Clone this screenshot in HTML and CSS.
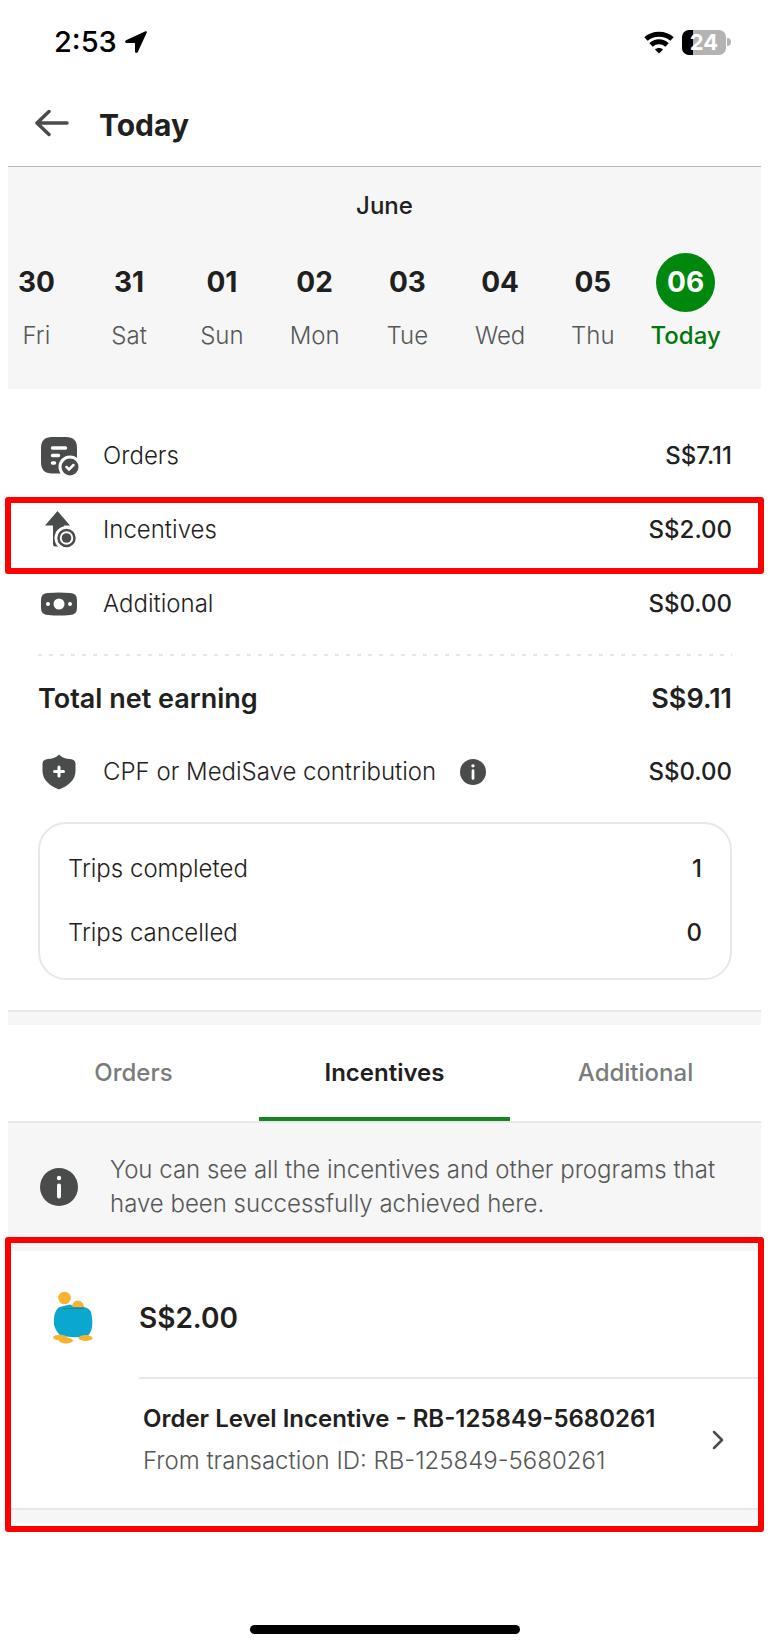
FILE: index.html
```html
<!DOCTYPE html>
<html lang="en">
<head>
    <meta charset="UTF-8">
    <meta name="viewport" content="width=device-width, initial-scale=1.0">
    <title>Today</title>
    <link rel="stylesheet" href="styles.css">
</head>
<body>
    <div class="screen">
        <div class="status-bar">
            <span class="time">2:53</span>
            <svg class="location" width="22" height="22" viewBox="0 0 22 22" fill="#000">
                <path d="M20.5 0.3 L1 9.2 C-0.4 10 0 12 1.5 12 H9.6 Q10 12 10 12.4 V20.4 C10 22 12 22.4 12.8 21 L21.8 1.6 C22.2 0.6 21.5 -0.1 20.5 0.3 Z"/>
            </svg>
            <svg class="wifi" width="30" height="23" viewBox="0 0 30 23" fill="none" stroke="#000" stroke-width="5">
                <path d="M2 8 C9 1.500 21 1.500 28 8"/>
                <path d="M7 14 C11.5 9.800 18.5 9.800 23 14"/>
                <path d="M15 22.500 L11 18.500 C13 16.500 17 16.500 19 18.500 Z" fill="#000" stroke="none"/>
            </svg>
            <span class="battery">24</span>
            <span class="battery-tip"></span>
        </div>

        <header class="header">
            <button class="back" aria-label="Back">
                <svg width="34" height="28" viewBox="0 0 34 28" fill="none" stroke="#4a4c4b" stroke-width="3.500" stroke-linecap="round" stroke-linejoin="round">
                    <path d="M32 14 H2 M14 2.500 L2 14 L14 25.500"/>
                </svg>
            </button>
            <h1>Today</h1>
        </header>

        <section class="calendar">
            <h2>June</h2>
            <div class="days">
                <button class="day"><b>30</b><span>Fri</span></button>
                <button class="day"><b>31</b><span>Sat</span></button>
                <button class="day"><b>01</b><span>Sun</span></button>
                <button class="day"><b>02</b><span>Mon</span></button>
                <button class="day"><b>03</b><span>Tue</span></button>
                <button class="day"><b>04</b><span>Wed</span></button>
                <button class="day"><b>05</b><span>Thu</span></button>
                <button class="day active"><b>06</b><span>Today</span></button>
            </div>
        </section>

        <section class="summary">
            <div class="row">
                <svg class="icon" width="42" height="42" viewBox="0 0 42 42">
                    <path d="M13 2 H27 Q38 2 38 13 V27 Q38 38.500 27 38.500 H13 Q2 38.500 2 27 V13 Q2 2 13 2 Z" fill="#4a4c4b"/>
                    <path d="M13.500 13 H26.500 M13.500 20.500 H19.500 M13.500 28 H15.500" stroke="#fff" stroke-width="3.500" stroke-linecap="round"/>
                    <circle cx="31" cy="32" r="11.500" fill="#fff"/>
                    <circle cx="31" cy="32" r="8.500" fill="#4a4c4b"/>
                    <path d="M27.500 32 L30 34.500 L34.500 30" fill="none" stroke="#fff" stroke-width="2.500" stroke-linecap="round"/>
                </svg>
                <span class="label">Orders</span>
                <span class="amount">S$7.11</span>
            </div>
            <div class="row highlight">
                <svg class="icon" width="42" height="42" viewBox="0 0 42 42">
                    <path d="M18.500 2 L31 16.500 H25 V37.500 H16 Q14 37.500 14 35 V16.500 H6 Z" fill="#4a4c4b"/>
                    <circle cx="27.500" cy="29" r="12" fill="#fff"/>
                    <circle cx="27.500" cy="29" r="8" fill="none" stroke="#4a4c4b" stroke-width="2.500"/>
                    <circle cx="27.500" cy="29" r="4.800" fill="#4a4c4b"/>
                </svg>
                <span class="label">Incentives</span>
                <span class="amount">S$2.00</span>
            </div>
            <div class="row">
                <svg class="icon" width="42" height="42" viewBox="0 0 42 42">
                    <path d="M9 10 Q20 9 31 10 Q38 10 38 17 V25 Q38 32 31 32 Q20 33 9 32 Q2 32 2 25 V17 Q2 10 9 10 Z" fill="#4a4c4b"/>
                    <circle cx="20" cy="21" r="5.500" fill="#fff"/>
                    <circle cx="9" cy="21" r="2" fill="#fff"/>
                    <circle cx="31" cy="21" r="2" fill="#fff"/>
                </svg>
                <span class="label">Additional</span>
                <span class="amount">S$0.00</span>
            </div>

            <div class="divider"></div>

            <div class="row total">
                <span>Total net earning</span>
                <span class="amount">S$9.11</span>
            </div>
            <div class="row cpf">
                <svg class="icon" width="42" height="42" viewBox="0 0 42 42">
                    <path d="M20 3.500 C23.500 7 27 8 31 8 Q36.500 8.500 36.500 12.500 V20 C36.500 29 29 35 20 38.500 C11 35 3.500 29 3.500 20 V12.500 Q3.500 8.500 9 8 C13 8 16.500 7 20 3.500 Z" fill="#4a4c4b"/>
                    <path d="M20 16 V25 M15.500 20.500 H24.500" stroke="#fff" stroke-width="3" stroke-linecap="round"/>
                </svg>
                <span class="label">CPF or MediSave contribution</span>
                <button class="info" aria-label="About contributions">
                    <svg width="26" height="26" viewBox="0 0 38 38">
                        <circle cx="19" cy="19" r="19" fill="#4a4c4b"/>
                        <circle cx="19" cy="10" r="2.500" fill="#fff"/>
                        <path d="M19 17 V28.500" stroke="#fff" stroke-width="4" stroke-linecap="round"/>
                    </svg>
                </button>
                <span class="amount">S$0.00</span>
            </div>

            <div class="trips">
                <div class="trip"><span class="label">Trips completed</span><span class="count">1</span></div>
                <div class="trip"><span class="label">Trips cancelled</span><span class="count">0</span></div>
            </div>
        </section>

        <div class="spacer"></div>

        <nav class="tabs">
            <button>Orders</button>
            <button class="active">Incentives</button>
            <button>Additional</button>
        </nav>

        <div class="notice">
            <svg width="38" height="38" viewBox="0 0 38 38">
                <circle cx="19" cy="19" r="19" fill="#4a4c4b"/>
                <circle cx="19" cy="10" r="2.200" fill="#fff"/>
                <path d="M19 17.500 V28.500" stroke="#fff" stroke-width="4" stroke-linecap="round"/>
            </svg>
            <p>You can see all the incentives and other programs that have been successfully achieved here.</p>
        </div>

        <section class="incentive highlight">
            <div class="incentive-head">
                <svg width="40" height="54" viewBox="0 0 40 54">
                    <circle cx="11.500" cy="7" r="6.300" fill="#f7b32f"/>
                    <path d="M18.500 18 Q19 9.500 25 9.500 Q31 10 31.500 18 Z" fill="#f7b32f"/>
                    <path d="M5 17 Q8 15 18 13.500 L20 16 H31 Q36 17 38 21 Q40 30 39 37 Q37 44 33 45.500 Q20 47 8 45 Q3 41 1 34 Q0 22 5 17 Z" fill="#0aa8d0"/>
                    <path d="M9 17.500 H31" stroke="#22887d" stroke-width="1"/>
                    <ellipse cx="7" cy="46.500" rx="7" ry="2.800" fill="#f7b32f"/>
                    <ellipse cx="13" cy="49.500" rx="7" ry="3" fill="#f7b32f"/>
                    <ellipse cx="32.500" cy="47" rx="7" ry="3" fill="#f7b32f"/>
                </svg>
                <strong>S$2.00</strong>
            </div>
            <a class="incentive-item" href="#">
                <span class="incentive-text">
                    <span class="incentive-title">Order Level Incentive - RB-125849-5680261</span>
                    <span class="incentive-source">From transaction ID: RB-125849-5680261</span>
                </span>
                <svg width="12" height="20" viewBox="0 0 12 20" fill="none" stroke="#4a4c4b" stroke-width="2.500" stroke-linecap="round" stroke-linejoin="round">
                    <path d="M2 2 L10 10 L2 18"/>
                </svg>
            </a>
        </section>

        <div class="spacer"></div>

        <div class="home-indicator"></div>
    </div>
</body>
</html>
```
FILE: styles.css
```css
* {
    box-sizing: border-box;
}

body {
    margin: 0;
    background: #fff;
    color: #1f2120;
    font-family: Inter, "Liberation Sans", sans-serif;
    font-size: 24px;
    line-height: 34px;
}

h1, h2, p {
    margin: 0;
}

button {
    padding: 0;
    border: none;
    background: none;
    color: inherit;
    font: inherit;
    cursor: pointer;
}

svg {
    display: block;
    flex-shrink: 0;
}

.screen {
    padding: 0 13px 0 8px;
}

/* Status bar */
.status-bar {
    display: flex;
    align-items: center;
    height: 84px;
    padding: 0 30px 0 46px;
    color: #000;
}

.time {
    font-size: 29px;
    font-weight: 500;
}

.location {
    margin-left: 8px;
}

.wifi {
    margin-left: auto;
}

.battery {
    width: 44px;
    height: 25px;
    margin-left: 8px;
    border-radius: 7px;
    background: linear-gradient(90deg, #000 25%, #b3b3b3 25%);
    color: #fff;
    font-size: 22px;
    font-weight: 700;
    line-height: 25px;
    text-align: center;
}

.battery-tip {
    width: 4px;
    height: 8px;
    margin-left: 1px;
    border-radius: 0 4px 4px 0;
    background: #b3b3b3;
}

/* Header */
.header {
    display: flex;
    align-items: center;
    gap: 30px;
    height: 83px;
    padding: 0 27px 4px;
    border-bottom: 1px solid #b8b8b8;
}

.header h1 {
    padding-top: 4px;
    font-size: 30px;
    font-weight: 700;
}

/* Calendar */
.calendar {
    height: 222px;
    padding-top: 22px;
    background: #f6f6f6;
}

.calendar h2 {
    font-size: 24px;
    font-weight: 500;
    text-align: center;
}

/* first day is partly scrolled out on the left */
.days {
    display: grid;
    grid-template-columns: repeat(8, 1fr);
    margin: 30px 29px 0 -18px;
}

.day {
    display: flex;
    flex-direction: column;
    align-items: center;
    gap: 7px;
    color: #555756;
    font-weight: 300;
}

.day b {
    width: 59px;
    height: 59px;
    border-radius: 50%;
    color: #1f2120;
    font-size: 28px;
    font-weight: 700;
    line-height: 59px;
}

.day.active {
    color: #00780c;
    font-weight: 500;
}

.day.active b {
    background: #00880e;
    color: #fff;
}

/* Summary */
.summary {
    padding: 30px 29px 30px 30px;
}

.row {
    display: flex;
    align-items: center;
    height: 74px;
}

.cpf {
    height: 71px;
}

.icon {
    margin: 0 22px 0 1px;
}

.label {
    font-weight: 300;
}

.amount {
    margin-left: auto;
    font-weight: 500;
}

.highlight {
    position: relative;
}

/* red frame over the content */
.highlight::after {
    content: "";
    position: absolute;
    inset: 4px -32px -7px -33px;
    border: 6px solid #ff0000;
    border-radius: 3px;
    pointer-events: none;
}

.divider {
    height: 2px;
    margin: 13px 0 6px;
    background: repeating-linear-gradient(90deg, #e6e6e6 0 4px, transparent 4px 11px);
}

.total {
    font-size: 27px;
    font-weight: 600;
}

.total .amount {
    font-weight: 600;
}

.info {
    margin-left: 24px;
}

.trips {
    margin-top: 15px;
    padding: 13px 28px;
    border: 2px solid #e8e8e8;
    border-radius: 28px;
}

.trip {
    display: flex;
    align-items: center;
    justify-content: space-between;
    height: 64px;
}

.count {
    font-weight: 500;
}

.spacer {
    height: 15px;
    border-top: 2px solid #e8e8e8;
    background: #f6f6f6;
}

/* Tabs */
.tabs {
    display: grid;
    grid-template-columns: repeat(3, 1fr);
    height: 98px;
    border-bottom: 2px solid #e8e8e8;
}

.tabs button {
    border-top: 4px solid transparent;
    border-bottom: 4px solid transparent;
    color: #7a7c7b;
    font-weight: 500;
}

.tabs .active {
    border-bottom-color: #13861f;
    color: #1f2120;
    font-weight: 600;
}

.notice {
    display: flex;
    align-items: center;
    gap: 32px;
    padding: 30px 30px 30px 32px;
    background: #f6f6f6;
    color: #555756;
    font-weight: 300;
}

/* Incentive list */
.incentive.highlight::after {
    inset: -14px -3px -24px;
}

.incentive-head {
    display: flex;
    align-items: center;
    gap: 46px;
    height: 126px;
    padding: 8px 0 0 45px;
}

.incentive-head strong {
    font-size: 28px;
    font-weight: 600;
}

.incentive-item {
    display: flex;
    align-items: center;
    justify-content: space-between;
    height: 131px;
    margin-left: 131px;
    padding: 0 37px 8px 4px;
    border-top: 2px solid #e8e8e8;
    color: #555756;
    font-weight: 300;
    text-decoration: none;
}

.incentive-text {
    display: flex;
    flex-direction: column;
    gap: 8px;
}

.incentive-title {
    color: #1f2120;
    font-weight: 600;
}

.home-indicator {
    width: 270px;
    height: 9px;
    margin: 102px auto 5px;
    border-radius: 5px;
    background: #000;
}
```
